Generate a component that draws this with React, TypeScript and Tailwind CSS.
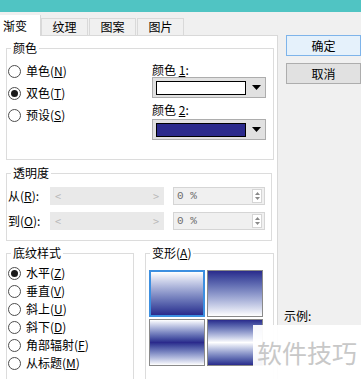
import React from "react";

const FONT = "font-['Noto_Sans_CJK_SC','Noto_Sans',sans-serif]";

function Mn({ c }: { c: string }) {
  return (
    <span>
      (<span className="underline underline-offset-[1px]">{c}</span>)
    </span>
  );
}

function Radio({ checked, label, m, h }: { checked?: boolean; label: string; m: string; h: string }) {
  return (
    <div className={`flex items-center ${h}`}>
      <div className="w-[13px] h-[13px] rounded-full border border-[#4d4d4d] bg-white flex items-center justify-center">
        {checked && <div className="w-[7px] h-[7px] rounded-full bg-[#1a1a1a]" />}
      </div>
      <span className="ml-[5px] text-[12px] leading-[14px] text-black">
        {label}
        <Mn c={m} />
      </span>
    </div>
  );
}

function Group({ label, className, children, lx = "left-[4px]" }: { label: React.ReactNode; className: string; children?: React.ReactNode; lx?: string }) {
  return (
    <div className={`relative border border-[#dcdcdc] ${className}`}>
      <div className={`absolute -top-[8px] ${lx} px-[2px] bg-white text-[12px] leading-[14px] text-black`}>{label}</div>
      {children}
    </div>
  );
}

function ColorBox({ color }: { color: string }) {
  return (
    <div className="h-[21px] w-[114px] bg-[#e1e1e1] border border-[#adadad] flex items-center pl-[3px]">
      <div className={`h-[14px] w-[90px] border border-black ${color}`} />
      <svg width="9" height="5" viewBox="0 0 9 5" className="ml-[6px]">
        <path d="M0 0 H9 L4.5 5 Z" fill="#000" />
      </svg>
    </div>
  );
}

function TransRow({ label, m }: { label: string; m: string }) {
  return (
    <div className="flex items-center h-[18px]">
      <div className="w-[42px] text-[12px] leading-[14px]">
        {label}
        <Mn c={m} />:
      </div>
      <div className="w-[114px] h-[18px] bg-[#e9e9e9] flex items-center justify-between px-[5px] text-[#b8b8b8] text-[11px]">
        <span>&lt;</span>
        <span>&gt;</span>
      </div>
      <div className="ml-[9px] w-[92px] h-[18px] bg-[#f0f0f0] border border-[#d5d5d5] flex items-center pl-[3px] pr-[2px]">
        <span className="text-[11px] text-[#6d6d6d] leading-[14px] font-['Liberation_Mono',monospace]">0 %</span>
        <div className="ml-auto w-[10px] h-[14px] bg-white border border-[#d5d5d5] flex flex-col items-center justify-center gap-[2px]">
          <svg width="5" height="3" viewBox="0 0 5 3"><path d="M0 3 L2.5 0 L5 3 Z" fill="#8a8a8a" /></svg>
          <svg width="5" height="3" viewBox="0 0 5 3"><path d="M0 0 L5 0 L2.5 3 Z" fill="#8a8a8a" /></svg>
        </div>
      </div>
    </div>
  );
}

export default function App() {
  return (
    <div className={`relative w-[361px] h-[379px] overflow-hidden bg-[#f0f0f0] text-black ${FONT}`}>
      <div className="h-[12px] bg-[#50c4c3]" />
      <div className="flex">
        {/* left column */}
        <div className="w-[283px] flex flex-col">
          <div className="mt-[3px] h-[20px] flex items-end text-[12px] leading-[14px]">
            <div className="relative z-10 -mb-px h-[21px] w-[41px] bg-white border-r border-[#d9d9d9] pl-[3px] pt-[4px]">渐变</div>
            <div className="h-[17px] w-[47px] border-t border-r border-l border-[#d9d9d9] bg-[#f0f0f0] flex items-center justify-center">纹理</div>
            <div className="ml-[1px] h-[17px] w-[47px] border-t border-r border-l border-[#d9d9d9] bg-[#f0f0f0] flex items-center justify-center">图案</div>
            <div className="ml-[1px] h-[17px] w-[47px] border-t border-r border-l border-[#d9d9d9] bg-[#f0f0f0] flex items-center justify-center">图片</div>
          </div>
          <div className="h-[400px] bg-white border-t border-r border-[#d9d9d9] pl-[6px] pt-[12px]">
            {/* 颜色 */}
            <Group label="颜色" className="w-[268px] h-[112px] flex">
              <div className="w-[145px] pl-[1px] pt-[11px]">
                <Radio label="单色" m="N" h="h-[22px]" />
                <Radio checked label="双色" m="T" h="h-[22px]" />
                <Radio label="预设" m="S" h="h-[22px]" />
              </div>
              <div className="pt-[14px] text-[12px] leading-[14px]">
                <div className="h-[14px]">
                  颜色 <span className="underline underline-offset-[1px]">1</span>:
                </div>
                <ColorBox color="bg-white" />
                <div className="h-[14px] mt-[5px]">
                  颜色 <span className="underline underline-offset-[1px]">2</span>:
                </div>
                <div className="mt-[2px]">
                  <ColorBox color="bg-[#2b2a8c]" />
                </div>
              </div>
            </Group>
            {/* 透明度 */}
            <Group label="透明度" className="mt-[13px] w-[266px] h-[68px] pl-[1px] pt-[13px]">
              <TransRow label="从" m="R" />
              <div className="mt-[7px]">
                <TransRow label="到" m="O" />
              </div>
            </Group>
            {/* bottom groups */}
            <div className="mt-[12px] flex">
              <Group label="底纹样式" className="w-[128px] h-[140px] pl-[1px] pt-[10px]">
                <Radio checked label="水平" m="Z" h="h-[18px]" />
                <Radio label="垂直" m="V" h="h-[18px]" />
                <Radio label="斜上" m="U" h="h-[18px]" />
                <Radio label="斜下" m="D" h="h-[18px]" />
                <Radio label="角部辐射" m="F" h="h-[18px]" />
                <Radio label="从标题" m="M" h="h-[18px]" />
              </Group>
              <Group
                label={
                  <span>
                    变形<Mn c="A" />
                  </span>
                }
                className="ml-[11px] w-[129px] h-[140px] pl-[3px] pt-[16px]"
              >
                <div className="grid grid-cols-[56px_56px] gap-[2px]">
                  <div className="h-[47px] border-2 border-[#3c8fe0] bg-linear-to-b from-white to-[#2b2a8c]" />
                  <div className="h-[47px] border border-[#8a8a8a] bg-linear-to-b from-[#2b2a8c] to-white" />
                  <div className="h-[47px] border border-[#8a8a8a] bg-linear-to-b from-white via-[#2b2a8c] to-white" />
                  <div className="h-[47px] border border-[#8a8a8a] bg-linear-to-b from-[#2b2a8c] via-white to-[#2b2a8c]" />
                </div>
              </Group>
            </div>
          </div>
        </div>
        {/* right column */}
        <div className="flex-1 pl-[8px] flex flex-col text-[12px] leading-[14px]">
          <div className="mt-[23px] w-[75px] h-[21px] bg-[#e5f1fb] border border-[#7eb4ea] flex items-center justify-center">确定</div>
          <div className="mt-[7px] w-[75px] h-[21px] bg-[#e1e1e1] border border-[#adadad] flex items-center justify-center">取消</div>
          <div className="mt-[225px] -ml-[2px] h-[14px]">示例:</div>
        </div>
      </div>
      {/* watermark */}
      <div className="absolute left-[253px] top-[325px] w-[108px] h-[54px] bg-white/95 flex items-center pl-[4px]">
        <span className="text-[25px] leading-[30px] text-[#c8c8c8] tracking-[0px]">软件技巧</span>
      </div>
    </div>
  );
}
